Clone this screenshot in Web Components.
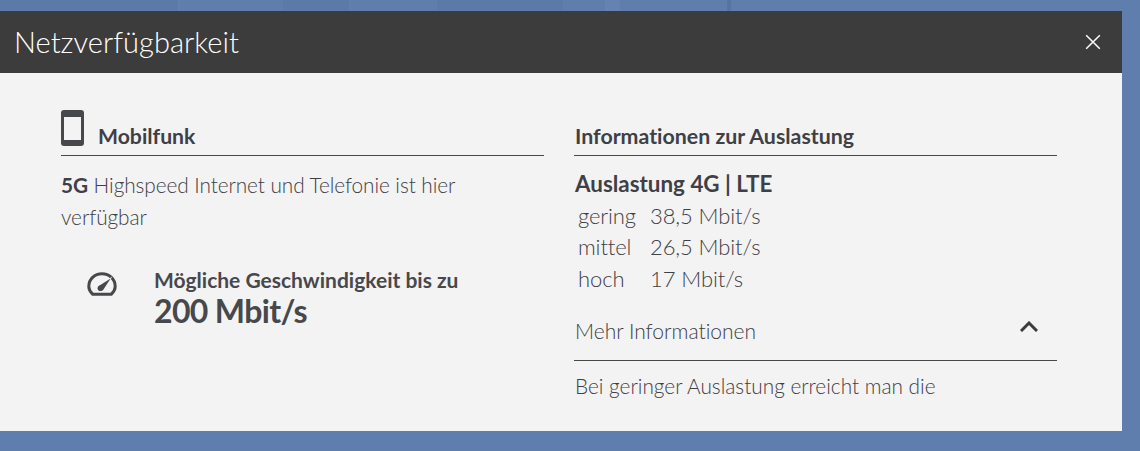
<!DOCTYPE html>
<html lang="de"><head><meta charset="utf-8">
<style>
html,body{margin:0;padding:0;height:451px;overflow:hidden;background:#5f7ead;font-family:Lato,sans-serif;color:#3f4045}
body{background:linear-gradient(90deg,#5b7aa9 0 178px,#627fae 178px 180px,#5f7ead 180px 283px,#5b7aa9 283px 349px,#627fae 349px 351px,#5f7ead 351px 437px,#5b7aa9 437px 563px,#5f7ead 563px 605px,#6582b0 605px 620px,#5f7ead 620px 727px,#56749f 727px 731px,#5f7ead 731px) no-repeat top left/100% 11px,#5f7ead}
</style></head><body>
<net-dialog>
  <span slot="title">Netzverfügbarkeit</span>
  <mobile-panel></mobile-panel>
  <load-panel></load-panel>
</net-dialog>
<script>
function el(name, html){
  customElements.define(name, class extends HTMLElement{
    constructor(){super();this.attachShadow({mode:'open'}).innerHTML=html;}
  });
}
el('net-dialog',`<style>
:host{display:block;width:1122px;height:420px;margin-top:11px;background:#f3f3f3}
header{height:62px;background:#3c3c3c;color:#fff;display:flex;align-items:center;justify-content:space-between;padding:0 21px 0 14px;box-sizing:border-box}
h1{margin:0;font:300 29.1px/34px Lato,sans-serif;font-variant-ligatures:none}
svg{display:block}
main{display:grid;grid-template-columns:483px 483px;column-gap:30px;padding:38px 0 0 61px;align-items:start}
</style>
<header><h1><slot name="title"></slot></h1>
<svg width="16" height="16" viewBox="0 0 16 16"><path d="M1.2 1.2 14.8 14.8M14.8 1.2 1.2 14.8" stroke="#fff" stroke-width="1.5" fill="none"/></svg></header>
<main><slot></slot></main>`);
el('section-head',`<style>
:host{display:flex;align-items:flex-end;height:44px;border-bottom:1px solid #47484c;font:700 21.2px/24px Lato,sans-serif;font-variant-ligatures:none;color:#3f4045}
.t{padding-bottom:7px}
:host([inset]) .t{padding-left:1px;font-size:21.35px}
</style><slot name="icon"></slot><span class="t"><slot></slot></span>`);
el('mobile-panel',`<style>
:host{display:block;font:300 20.8px/32px Lato,sans-serif;font-variant-ligatures:none;color:#3f4045}
b{font-weight:700}
p{margin:13px 0 0;width:420px;letter-spacing:-.07px}
.speed{display:flex;margin-top:32px;padding-left:26px}
.speed svg{display:block;margin-top:7px;flex:none}
.txt{margin-left:37px;font-weight:700;color:#47484c}
.a{font-size:21px;line-height:24px;margin-top:3px}
.b{font-size:32px;line-height:38px;letter-spacing:-.65px}
</style>
<section-head><svg slot="icon" style="display:block;margin:0 14px 9px 0" width="23" height="36" viewBox="0 0 23 36"><rect x="0" y="0" width="23" height="36" rx="3" fill="#47484c"/><rect x="3" y="7" width="17" height="23" fill="#f3f3f3"/></svg>Mobilfunk</section-head>
<p><b>5G</b> Highspeed Internet und Telefonie ist hier verfügbar</p>
<div class="speed"><svg width="30" height="24" viewBox="0 0 30 24"><path d="M5.8 22.3H24.2C26.8 19.8 28.2 17.2 28.2 14.4 28.2 7.2 22.4 1.8 15 1.8S1.8 7.2 1.8 14.4C1.8 17.2 3.2 19.8 5.8 22.3Z" fill="none" stroke="#47484c" stroke-width="3" stroke-linejoin="round"/><path d="M10.6 14.2 25.4 4.6 16 19.2Z" fill="#f3f3f3"/><path d="M11.4 14.2 23.6 6.6 15.8 18.6Z" fill="#47484c"/><circle cx="13.4" cy="16.2" r="2.8" fill="#47484c"/></svg>
<div class="txt"><div class="a">Mögliche Geschwindigkeit bis zu</div><div class="b">200 Mbit/s</div></div></div>`);
el('load-panel',`<style>
:host{display:block;font:300 20.8px/32px Lato,sans-serif;font-variant-ligatures:none;color:#3f4045}
h3{margin:12px 0 0 1px;font:700 22.4px/32px Lato,sans-serif;font-variant-ligatures:none}
.g{display:grid;grid-template-columns:72px auto;justify-content:start;padding-left:4px;font-size:22px;line-height:31.5px;margin-top:-.5px;letter-spacing:-.1px}
.m{display:flex;justify-content:space-between;align-items:center;height:66.5px;border-bottom:1px solid #47484c;box-sizing:border-box;padding:8px 19px 0 1px;font-size:21px}
.m svg{display:block;margin-top:-8px}
p{margin:9px 0 0 1px}
</style>
<section-head inset>Informationen zur Auslastung</section-head>
<h3>Auslastung 4G | LTE</h3>
<div class="g"><span>gering</span><span>38,5 Mbit/s</span><span>mittel</span><span>26,5 Mbit/s</span><span>hoch</span><span>17 Mbit/s</span></div>
<div class="m"><span>Mehr Informationen</span><svg width="18" height="11" viewBox="0 0 18 11"><path d="M1 10 9 2 17 10" fill="none" stroke="#3c3c3c" stroke-width="3"/></svg></div>
<p>Bei geringer Auslastung erreicht man die</p>`);
</script>
</body></html>
